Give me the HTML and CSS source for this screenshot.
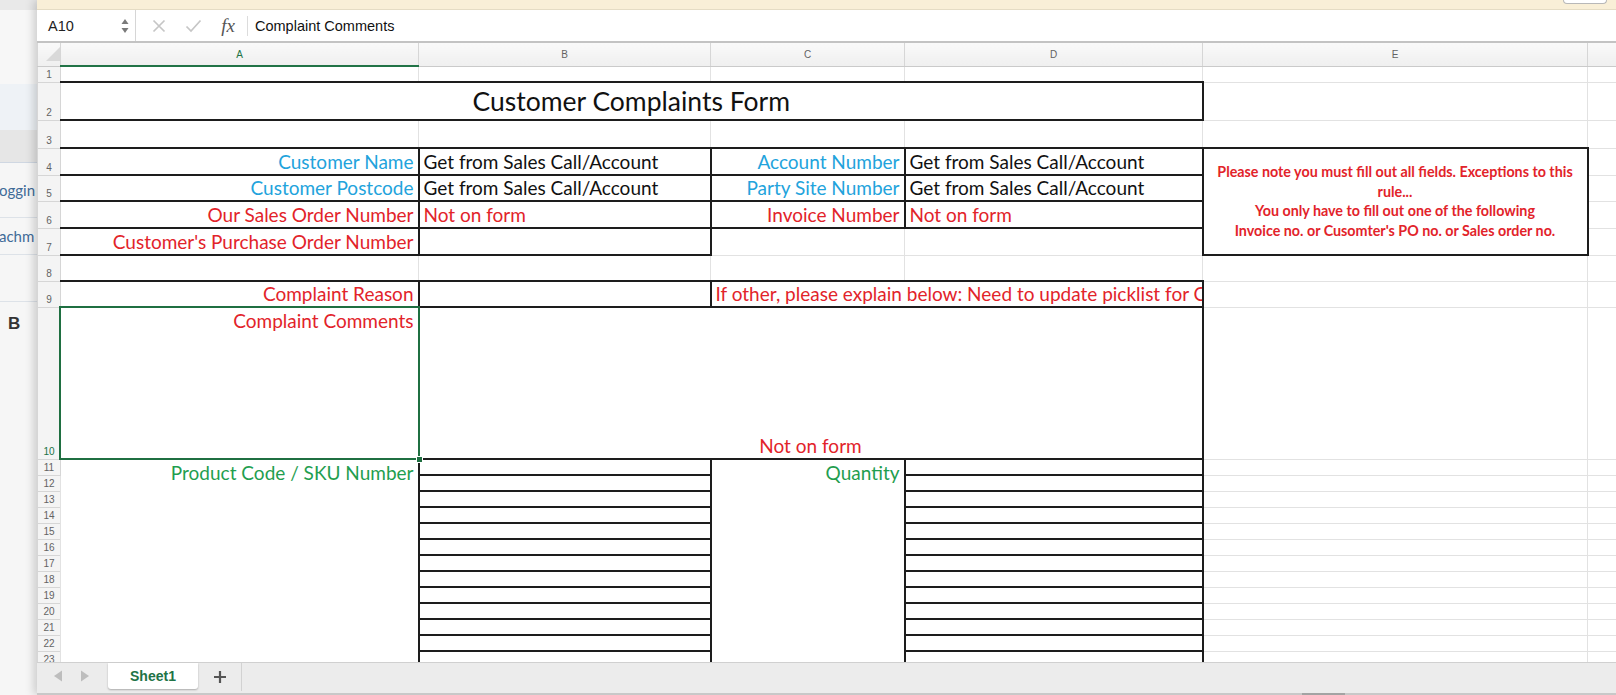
FILE: index.html
```html
<!DOCTYPE html>
<html lang="en">
<head>
  <meta charset="UTF-8">
  <meta name="viewport" content="width=device-width, initial-scale=1.0">
  <title>Customer Complaints Form</title>
  <link rel="stylesheet" href="styles.css">
</head>
<body>
  <!-- window behind the workbook, only its right edge shows -->
  <div class="backwin">
    <div class="bw-top"></div>
    <div class="bw-plain"></div>
    <div class="bw-blue"></div>
    <div class="bw-gray"></div>
    <div class="bw-item bw-tall"><span class="bw-log">oggin</span></div>
    <div class="bw-item"><span class="bw-att">achm</span></div>
    <div class="bw-item bw-empty"></div>
    <div class="bw-rest"><span>B</span></div>
  </div>

  <div class="excel">
    <div class="infobar"><div class="infobtn"></div></div>

    <div class="formulabar">
      <div class="namebox">
        <span>A10</span>
        <svg class="spin" width="8" height="16" viewBox="0 0 8 16">
          <path d="M4 1 L7.5 6 L0.5 6 Z" fill="#7a7a7a"/>
          <path d="M4 15 L7.5 10 L0.5 10 Z" fill="#7a7a7a"/>
        </svg>
      </div>
      <div class="tool first">
        <svg width="14" height="14" viewBox="0 0 14 14"><path d="M1.5 1.5 L12.5 12.5 M12.5 1.5 L1.5 12.5" stroke="#c6c6c6" stroke-width="1.7" fill="none"/></svg>
      </div>
      <div class="tool">
        <svg width="17" height="14" viewBox="0 0 17 14"><path d="M1.5 7.5 L6 12 L15.5 1.5" stroke="#c6c6c6" stroke-width="1.7" fill="none"/></svg>
      </div>
      <div class="tool fx">fx</div>
      <div class="fsep"></div>
      <div class="ftext">Complaint Comments</div>
    </div>

    <div class="sheet">
      <table class="grid">
        <colgroup>
          <col class="c-rh"><col class="c-a"><col class="c-b"><col class="c-c"><col class="c-d"><col class="c-e"><col class="c-f">
        </colgroup>
        <tr class="hdr">
          <th class="corner"><svg width="14" height="14" viewBox="0 0 14 14"><path d="M14 0 L14 14 L0 14 Z" fill="#d9d9d9"/></svg></th>
          <th class="cur">A</th><th>B</th><th>C</th><th>D</th><th>E</th><th></th>
        </tr>
        <tr class="h16"><th>1</th><td></td><td></td><td></td><td></td><td></td><td></td></tr>
        <tr class="h38">
          <th>2</th>
          <td colspan="4" class="title bt bb br">Customer Complaints Form</td>
          <td></td><td></td>
        </tr>
        <tr class="h28"><th>3</th><td></td><td></td><td></td><td></td><td></td><td></td></tr>
        <tr class="h27">
          <th>4</th>
          <td class="lbl blue bt bb br">Customer Name</td>
          <td class="bx">Get from Sales Call/Account</td>
          <td class="lbl blue bx">Account Number</td>
          <td class="bx">Get from Sales Call/Account</td>
          <td rowspan="4" class="note bx">
            Please note you must fill out all fields. Exceptions to this rule...<br>
            You only have to fill out one of the following<br>
            Invoice no. or Cusomter's PO no. or Sales order no.
          </td>
          <td></td>
        </tr>
        <tr class="h26">
          <th>5</th>
          <td class="lbl blue bb br">Customer Postcode</td>
          <td class="bx">Get from Sales Call/Account</td>
          <td class="lbl blue bx">Party Site Number</td>
          <td class="bx">Get from Sales Call/Account</td>
          <td></td>
        </tr>
        <tr class="h27">
          <th>6</th>
          <td class="lbl red bb br">Our Sales Order Number</td>
          <td class="red bx">Not on form</td>
          <td class="lbl red bx">Invoice Number</td>
          <td class="red bx">Not on form</td>
          <td></td>
        </tr>
        <tr class="h27">
          <th>7</th>
          <td class="lbl red bb br">Customer's Purchase Order Number</td>
          <td class="bx"></td>
          <td></td><td></td><td></td>
        </tr>
        <tr class="h26"><th>8</th><td></td><td></td><td></td><td></td><td></td><td></td></tr>
        <tr class="h26">
          <th>9</th>
          <td class="lbl red bt bb br">Complaint Reason</td>
          <td class="bx"></td>
          <td colspan="2" class="red bx">If other, please explain below: Need to update picklist for Complaint Reason</td>
          <td></td><td></td>
        </tr>
        <tr class="h152">
          <th class="cur">10</th>
          <td class="lbl red top bb br">Complaint Comments</td>
          <td colspan="3" class="red mid bx">Not on form</td>
          <td></td><td></td>
        </tr>
        <tr class="h16">
          <th>11</th>
          <td rowspan="13" class="lbl green top br">Product Code / SKU Number</td>
          <td class="bx"></td>
          <td rowspan="13" class="lbl green top bt bl br">Quantity</td>
          <td class="bx"></td><td></td><td></td>
        </tr>
        <tr class="h16"><th>12</th><td class="bx"></td><td class="bx"></td><td></td><td></td></tr>
        <tr class="h16"><th>13</th><td class="bx"></td><td class="bx"></td><td></td><td></td></tr>
        <tr class="h16"><th>14</th><td class="bx"></td><td class="bx"></td><td></td><td></td></tr>
        <tr class="h16"><th>15</th><td class="bx"></td><td class="bx"></td><td></td><td></td></tr>
        <tr class="h16"><th>16</th><td class="bx"></td><td class="bx"></td><td></td><td></td></tr>
        <tr class="h16"><th>17</th><td class="bx"></td><td class="bx"></td><td></td><td></td></tr>
        <tr class="h16"><th>18</th><td class="bx"></td><td class="bx"></td><td></td><td></td></tr>
        <tr class="h16"><th>19</th><td class="bx"></td><td class="bx"></td><td></td><td></td></tr>
        <tr class="h16"><th>20</th><td class="bx"></td><td class="bx"></td><td></td><td></td></tr>
        <tr class="h16"><th>21</th><td class="bx"></td><td class="bx"></td><td></td><td></td></tr>
        <tr class="h16"><th>22</th><td class="bx"></td><td class="bx"></td><td></td><td></td></tr>
        <tr class="h16"><th>23</th><td class="bx"></td><td class="bx"></td><td></td><td></td></tr>
      </table>

      <!-- active cell A10 -->
      <div class="selection"><div class="handle"></div></div>
    </div>

    <div class="tabbar">
      <div class="tabnav">
        <svg width="10" height="12" viewBox="0 0 10 12"><path d="M9 0.5 L9 11.5 L1 6 Z" fill="#bdbdbd"/></svg>
        <svg width="10" height="12" viewBox="0 0 10 12"><path d="M1 0.5 L1 11.5 L9 6 Z" fill="#bdbdbd"/></svg>
      </div>
      <div class="tab">Sheet1</div>
      <div class="addtab">
        <svg width="14" height="14" viewBox="0 0 14 14"><path d="M7 1 L7 13 M1 7 L13 7" stroke="#555" stroke-width="2.2"/></svg>
      </div>
    </div>
    <div class="hscroll"><div class="thumb"></div></div>
  </div>
</body>
</html>
```

FILE: styles.css
```css
* {
  box-sizing: border-box;
}

body {
  margin: 0;
  width: 1616px;
  height: 695px;
  overflow: hidden;
  display: flex;
  font-family: 'Lato', sans-serif;
  background-color: #f4f4f4;
  color: #111;
}

/* window in the background */
.backwin {
  width: 37px;
  flex: none;
  display: flex;
  flex-direction: column;
  background: #f6f6f6;
  overflow: hidden;
}

.bw-top {
  height: 10px;
  background: #e9e9e9;
}

.bw-plain {
  height: 74px;
  background: #f7f7f7;
}

.bw-blue {
  height: 46px;
  background: #eef2f6;
}

.bw-gray {
  height: 33px;
  background: #e6e6e6;
  border-bottom: 1px solid #cfd7e2;
}

.bw-item {
  height: 37px;
  display: flex;
  align-items: center;
  border-bottom: 1px solid #dde2e8;
  font-size: 15px;
  color: #3f6b98;
  white-space: nowrap;
  overflow: hidden;
}

.bw-log {
  margin-left: -1px;
}

.bw-att {
  margin-left: -1px;
}

.bw-tall {
  height: 55px;
}

.bw-empty {
  height: 47px;
}

.bw-rest {
  flex: 1;
  padding: 12px 0 0 8px;
  font-family: 'Liberation Sans', sans-serif;
  font-weight: bold;
  font-size: 17px;
  color: #333;
}

/* workbook window */
.excel {
  width: 1579px;
  flex: none;
  display: flex;
  flex-direction: column;
  background: #fff;
  box-shadow: -3px 0 9px rgba(0, 0, 0, 0.18);
  position: relative;
  z-index: 1;
}

.infobar {
  height: 10px;
  background: #f9efd7;
  border-bottom: 1px solid #e5dcc4;
  display: flex;
  justify-content: flex-end;
}

.infobtn {
  width: 44px;
  height: 4px;
  margin-right: 9px;
  background: #fff;
  border: 1px solid #b8b8b8;
  border-top: none;
  border-radius: 0 0 4px 4px;
}

.formulabar {
  height: 33px;
  display: flex;
  align-items: center;
  background: #fff;
  border-bottom: 2px solid #c3c3c3;
  font-family: 'Liberation Sans', sans-serif;
  font-size: 14.5px;
}

.namebox {
  width: 99px;
  height: 100%;
  display: flex;
  align-items: center;
  justify-content: space-between;
  padding: 0 6px 0 11px;
  border-right: 1px solid #d6d6d6;
  color: #222;
}

.tool {
  width: 34px;
  display: flex;
  justify-content: center;
  align-items: center;
}

.tool.first {
  margin-left: 6px;
}

.fx {
  width: 36px;
  font-family: 'Liberation Serif', serif;
  font-style: italic;
  font-size: 19px;
  color: #555;
}

.fsep {
  width: 1px;
  height: 20px;
  background: #dcdcdc;
  margin: 0 7px 0 1px;
}

.ftext {
  color: #111;
}

/* sheet grid */
.sheet {
  height: 619px;
  overflow: hidden;
  position: relative;
}

.grid {
  border-collapse: collapse;
  table-layout: fixed;
  width: 1579px;
  font-size: 19px;
}

.c-rh { width: 23px; }
.c-a { width: 358px; }
.c-b { width: 292px; }
.c-c { width: 194px; }
.c-d { width: 298px; }
.c-e { width: 385px; }
.c-f { width: 29px; }

.grid th {
  background: #f4f4f4;
  border: 1px solid #d6d6d6;
  font-family: 'Liberation Sans', sans-serif;
  font-weight: normal;
  font-size: 10px;
  color: #636363;
  padding: 0 0 2px;
  vertical-align: bottom;
  text-align: center;
}

.grid .hdr th {
  height: 23px;
  vertical-align: middle;
  padding: 0;
  background: linear-gradient(#f9f9f9, #efefef);
  border-top: none;
  border-bottom: 1px solid #cacaca;
}

.grid .hdr th.cur {
  color: #217346;
  border-bottom: 2px solid #217346;
}

.grid th.cur {
  color: #217346;
}

.grid .corner {
  text-align: right;
  vertical-align: bottom;
  padding: 0 1px 1px 0;
  line-height: 0;
}

.grid td {
  border: 1px solid #e2e2e2;
  padding: 0 4px 0;
  vertical-align: bottom;
  white-space: nowrap;
  overflow: hidden;
  line-height: 1.2;
}

.h16 { height: 16px; }
.h26 { height: 26px; }
.h27 { height: 27px; }
.h28 { height: 28px; }
.h38 { height: 38px; }
.h152 { height: 152px; }

/* thick cell borders */
.grid td.bx { border: 2px solid #1d1d1d; }
.grid td.bt { border-top: 2px solid #1d1d1d; }
.grid td.bb { border-bottom: 2px solid #1d1d1d; }
.grid td.bl { border-left: 2px solid #1d1d1d; }
.grid td.br { border-right: 2px solid #1d1d1d; }

.lbl { text-align: right; }
.grid td.top { vertical-align: top; padding-top: 2px; }
.mid { text-align: center; }

.red { color: #e2232a; }
.blue { color: #22a3dc; }
.green { color: #1f9e4f; }

.grid td.title {
  text-align: center;
  font-size: 26.5px;
  vertical-align: middle;
  padding-top: 2px;
}

.grid td.note {
  white-space: normal;
  text-align: center;
  vertical-align: middle;
  font-weight: bold;
  font-size: 14.3px;
  line-height: 19.5px;
  color: #e2232a;
  padding: 0 10px 1px;
}

.selection {
  position: absolute;
  left: 22px;
  top: 263px;
  width: 361px;
  height: 154px;
  border: 2px solid #1f6f41;
  pointer-events: none;
}

.handle {
  position: absolute;
  right: -5px;
  bottom: -5px;
  width: 7px;
  height: 7px;
  background: #1f6f41;
  border: 1px solid #fff;
}

/* sheet tabs */
.tabbar {
  height: 31px;
  display: flex;
  align-items: flex-start;
  background: #ececec;
  border-top: 1px solid #d0d0d0;
}

.tabnav {
  width: 71px;
  height: 26px;
  display: flex;
  align-items: center;
  gap: 17px;
  padding-left: 16px;
}

.tab {
  width: 90px;
  height: 26px;
  display: flex;
  align-items: center;
  justify-content: center;
  background: #fff;
  border-radius: 0 0 3px 3px;
  box-shadow: 0 1px 2px rgba(0, 0, 0, 0.28);
  font-family: 'Liberation Sans', sans-serif;
  font-weight: bold;
  font-size: 14px;
  color: #217346;
}

.addtab {
  width: 44px;
  height: 28px;
  display: flex;
  align-items: center;
  justify-content: center;
  border-right: 1px solid #d2d2d2;
}

.hscroll {
  height: 2px;
  background: #c8c8c8;
}

.thumb {
  width: 43px;
  height: 2px;
  margin-left: 1265px;
  background: #a3a3a3;
}
```
